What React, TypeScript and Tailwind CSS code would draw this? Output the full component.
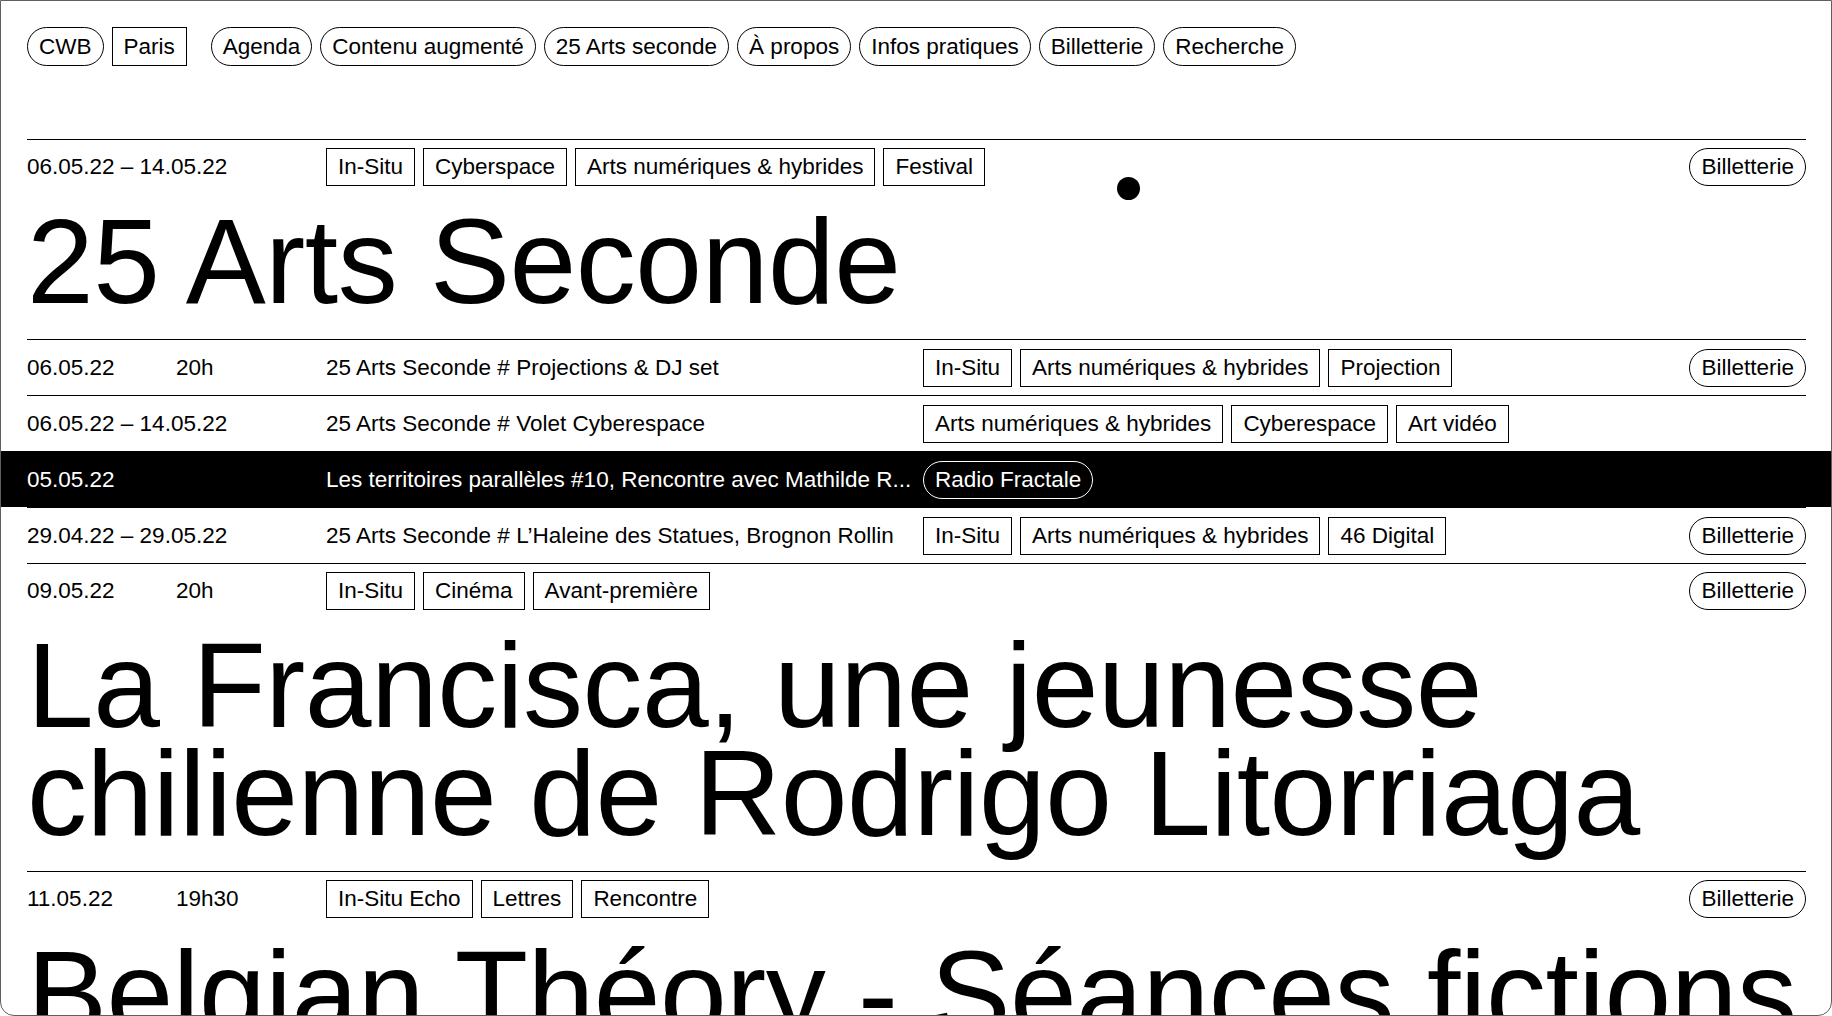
import React from "react";

type Kids = { children: React.ReactNode; className?: string };

const Pill = ({ children, className = "" }: Kids) => (
  <span
    className={
      "h-[38px] px-[11px] border border-black rounded-full flex items-center whitespace-nowrap shrink-0 " +
      className
    }
  >
    {children}
  </span>
);

const Tag = ({ children }: Kids) => (
  <span className="h-[38px] px-[11px] border border-black flex items-center whitespace-nowrap shrink-0">
    {children}
  </span>
);

const NavPill = ({ children }: Kids) => (
  <span className="h-[39px] px-[11px] border border-black rounded-full flex items-center whitespace-nowrap">
    {children}
  </span>
);

type ListRow = {
  date: string;
  time?: string;
  title: string;
  tags: string[];
  ticket?: boolean;
  dark?: boolean;
  pill?: string;
};

const listRows: ListRow[] = [
  {
    date: "06.05.22",
    time: "20h",
    title: "25 Arts Seconde # Projections & DJ set",
    tags: ["In-Situ", "Arts numériques & hybrides", "Projection"],
    ticket: true,
  },
  {
    date: "06.05.22 – 14.05.22",
    title: "25 Arts Seconde # Volet Cyberespace",
    tags: ["Arts numériques & hybrides", "Cyberespace", "Art vidéo"],
  },
  {
    date: "05.05.22",
    title: "Les territoires parallèles #10, Rencontre avec Mathilde R...",
    tags: [],
    pill: "Radio Fractale",
    dark: true,
  },
  {
    date: "29.04.22 – 29.05.22",
    title: "25 Arts Seconde # L’Haleine des Statues, Brognon Rollin",
    tags: ["In-Situ", "Arts numériques & hybrides", "46 Digital"],
    ticket: true,
  },
];

const DateCell = ({ date, time }: { date: string; time?: string }) => (
  <div className="w-[299px] shrink-0 flex items-center">
    <span className="min-w-[149px] whitespace-nowrap">{date}</span>
    {time && <span className="whitespace-nowrap">{time}</span>}
  </div>
);

const EventBlock = ({
  date,
  time,
  tags,
  title,
}: {
  date: string;
  time?: string;
  tags: string[];
  title: React.ReactNode;
}) => (
  <div className="pl-[26px] pr-[25px]">
    <div className="border-t border-black pt-[8px] pb-[24px]">
      <div className="flex items-center h-[38px]">
        <DateCell date={date} time={time} />
        <div className="flex gap-2">
          {tags.map((t) => (
            <Tag key={t}>{t}</Tag>
          ))}
        </div>
        <Pill className="ml-auto">Billetterie</Pill>
      </div>
      <h2 className="mt-[21px] text-[120px] leading-[108px] tracking-[-0.004em] font-normal">
        {title}
      </h2>
    </div>
  </div>
);

export default function App() {
  return (
    <div className="h-screen w-full overflow-hidden bg-white text-black border border-[#5f5f5f] rounded-b-[14px] relative [font-family:'Liberation_Sans',Arial,sans-serif] text-[22.5px]">
      <nav className="flex items-center pl-[26px] pt-[26px] mb-[73px]">
        <div className="flex items-center gap-2">
          <NavPill>CWB</NavPill>
          <span className="h-[39px] px-[11px] border border-black flex items-center">Paris</span>
        </div>
        <div className="flex items-center gap-2 ml-[24px]">
          {[
            "Agenda",
            "Contenu augmenté",
            "25 Arts seconde",
            "À propos",
            "Infos pratiques",
            "Billetterie",
            "Recherche",
          ].map((n) => (
            <NavPill key={n}>{n}</NavPill>
          ))}
        </div>
      </nav>

      <main>
        <EventBlock
          date="06.05.22 – 14.05.22"
          tags={["In-Situ", "Cyberspace", "Arts numériques & hybrides", "Festival"]}
          title="25 Arts Seconde"
        />

        {listRows.map((r, i) => (
          <div
            key={i}
            className={
              "pl-[26px] pr-[25px] " + (r.dark ? "bg-black text-white" : "")
            }
          >
            <div className="border-t border-black h-[56px] flex items-center">
              <DateCell date={r.date} time={r.time} />
              <div className="w-[597px] shrink-0 pr-[6px] whitespace-nowrap overflow-hidden">{r.title}</div>
              <div className="flex gap-2">
                {r.tags.map((t) => (
                  <Tag key={t}>{t}</Tag>
                ))}
                {r.pill && (
                  <span className="h-[38px] px-[11px] border border-white rounded-full flex items-center whitespace-nowrap">
                    {r.pill}
                  </span>
                )}
              </div>
              {r.ticket && <Pill className="ml-auto">Billetterie</Pill>}
            </div>
          </div>
        ))}

        <EventBlock
          date="09.05.22"
          time="20h"
          tags={["In-Situ", "Cinéma", "Avant-première"]}
          title="La Francisca, une jeunesse chilienne de Rodrigo Litorriaga"
        />

        <EventBlock
          date="11.05.22"
          time="19h30"
          tags={["In-Situ Echo", "Lettres", "Rencontre"]}
          title="Belgian Théory - Séances fictions"
        />
      </main>

      <div className="absolute left-[1116px] top-[176px] w-[23px] h-[23px] rounded-full bg-black" />
    </div>
  );
}
